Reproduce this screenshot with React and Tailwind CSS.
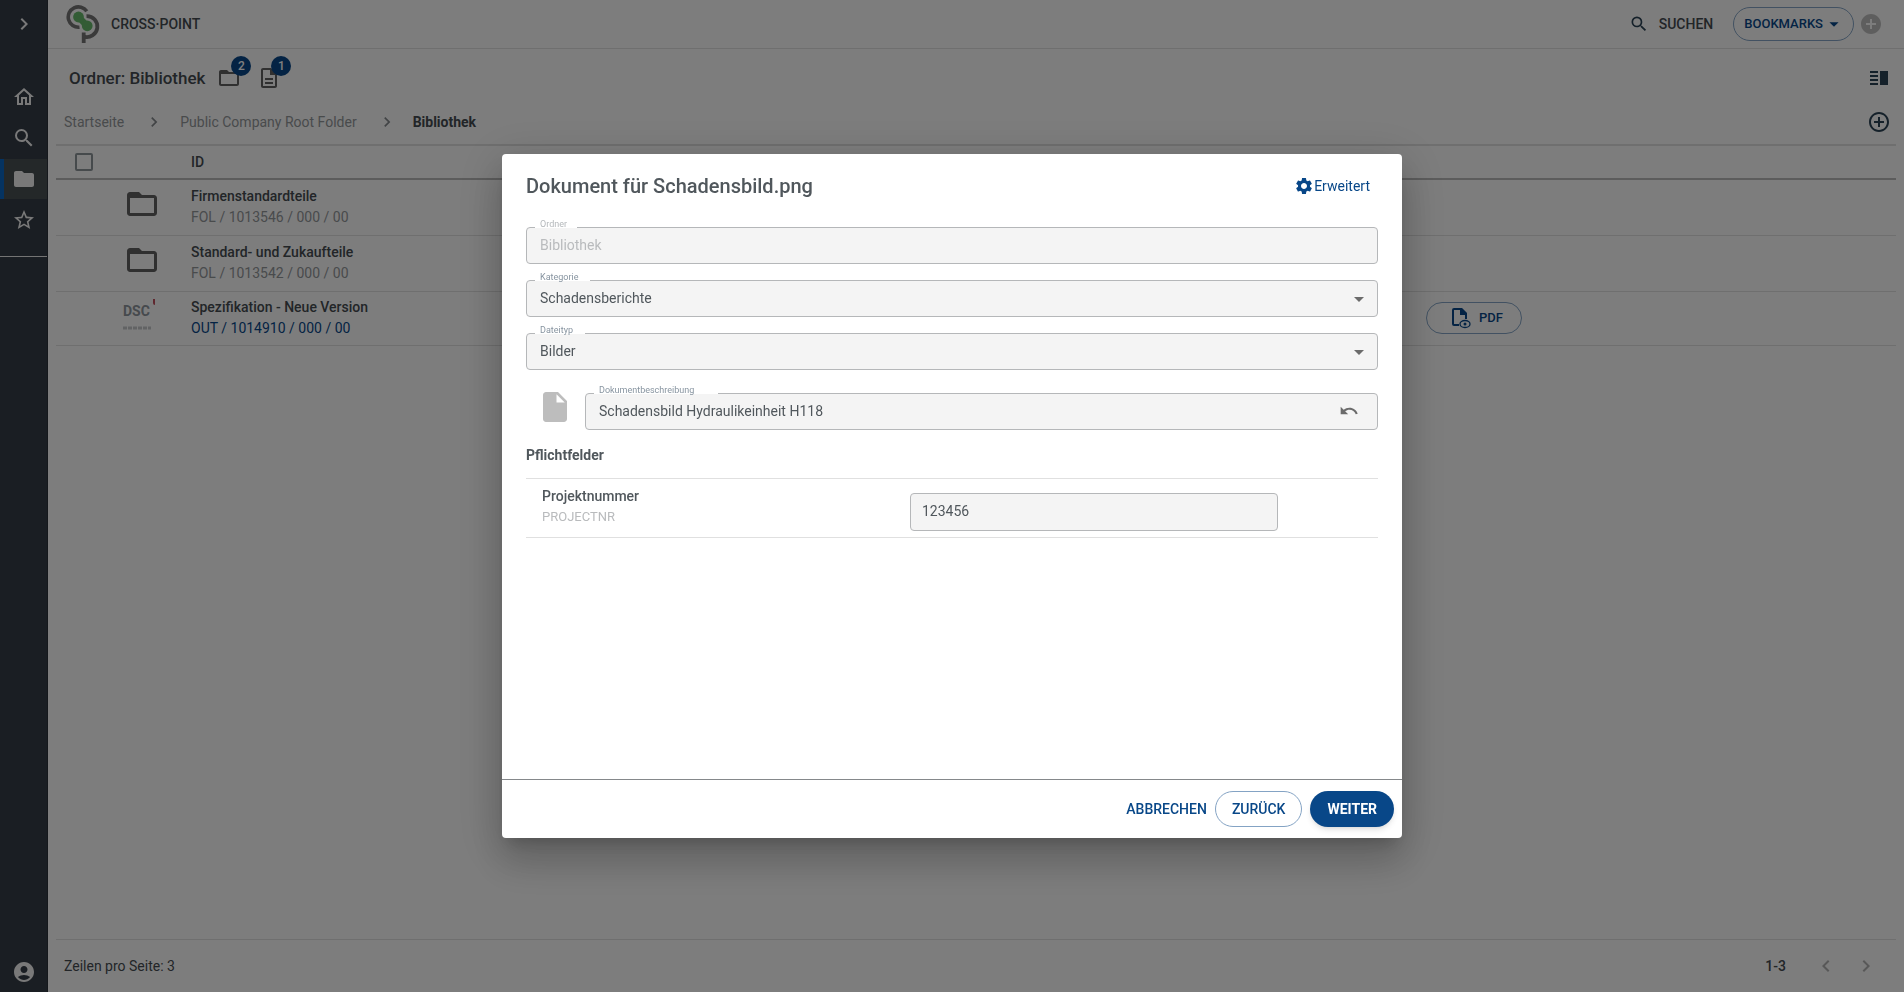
import React, { useState } from "react";
import {
  MdChevronLeft, MdChevronRight, MdSearch, MdFolder, MdStarBorder, MdAccountCircle, MdOutlineHome,
  MdArrowDropDown, MdAddCircle, MdAddCircleOutline, MdVerticalSplit, MdInsertDriveFile, MdSettings, MdUndo,
} from "react-icons/md";

const navItems = [
  { label: "Home",      Icon: MdOutlineHome },
  { label: "Suche",     Icon: MdSearch },
  { label: "Ordner",    Icon: MdFolder, active: true },
  { label: "Favoriten", Icon: MdStarBorder },
];

const rows = [
  { id: "FOL / 1013546 / 000 / 00", title: "Firmenstandardteile",         type: "folder" },
  { id: "FOL / 1013542 / 000 / 00", title: "Standard- und Zukaufteile",   type: "folder" },
  { id: "OUT / 1014910 / 000 / 00", title: "Spezifikation - Neue Version", type: "document" },
];

function Logo() {
  return (
    <svg width="34" height="38" viewBox="0 0 34 38" fill="none" aria-hidden="true">
      <path d="M20.8 6.2A10.2 10.2 0 1 0 13.500 22.2" stroke="#747474" strokeWidth="3.6" />
      <path d="M20.5 11.100A10.500 10.500 0 1 1 17.7 31.600M17.7 27.5V38" stroke="#747474" strokeWidth="3.8" />
      <path d="M12.5 12 21 20.700" stroke="#66b96a" strokeWidth="6.500" />
      <circle cx="12.5" cy="12" r="5.4" fill="#66b96a" />
      <circle cx="21.2" cy="20.800" r="5.4" fill="#66b96a" />
    </svg>
  );
}

function FolderOutline({ size }) {
  return (
    <svg width={size} height={size} viewBox="0 0 24 24" fill="currentColor" aria-hidden="true">
      <path d="M20 6h-8l-2-2H4c-1.1 0-1.99.9-1.99 2L2 18c0 1.1.9 2 2 2h16c1.1 0 2-.9 2-2V8c0-1.1-.9-2-2-2zm0 12H4V8h16v10z" />
    </svg>
  );
}

function DocumentOutline() {
  return (
    <svg width="24" height="24" viewBox="0 0 24 24" fill="currentColor" aria-hidden="true">
      <path d="M8 16h8v2H8zm0-4h8v2H8zm6-10H6c-1.1 0-2 .9-2 2v16c0 1.1.89 2 1.99 2H18c1.1 0 2-.9 2-2V8l-6-6zm4 18H6V4h7v5h5v11z" />
    </svg>
  );
}

function Thumbnail() {
  return (
    <div className="relative -ml-px h-8 w-8">
      <span className="block text-sm leading-6 font-bold text-[#8d949b]">DSC</span>
      <svg width="32" height="32" viewBox="0 0 32 32" className="absolute inset-0" fill="none" aria-hidden="true">
        <path d="M30 0h2v6q-2 0-2-2z" fill="#c0505e" />
        <path d="M0 29h28" stroke="#c4c7c9" strokeWidth="3" strokeDasharray="4 1" />
      </svg>
    </div>
  );
}

function PdfPreviewIcon() {
  return (
    <svg width="20" height="22" viewBox="0 0 20 22" fill="none" aria-hidden="true">
      <path d="M8 18H3q-1 0-1-1V3q0-1 1-1h7l5 5v5" stroke="currentColor" strokeWidth="2" />
      <path d="M9 1h2l5 5v2H9z" fill="currentColor" />
      <ellipse cx="14" cy="17" rx="5" ry="3.500" stroke="currentColor" strokeWidth="1.300" />
      <circle cx="14" cy="17" r="1.500" fill="currentColor" />
    </svg>
  );
}

function Sidebar() {
  return (
    <nav className="flex w-12 shrink-0 flex-col items-center border-r border-[#2a3038] bg-[#343c46] text-[#f2f2f2]">
      <button aria-label="Menü öffnen" className="flex h-12 w-full items-center justify-center">
        <MdChevronRight size={24} />
      </button>
      <div className="mt-[29px] flex w-full flex-col gap-px">
        {navItems.map(({ label, Icon, active }) => (
          <a key={label} href="#" aria-label={label}
            className={`flex h-10 items-center justify-center ${active ? "border-l-4 border-[#0b66c3] bg-[#485052] pr-1" : ""}`}>
            <Icon size={24} />
          </a>
        ))}
      </div>
      <hr className="mt-4 w-full border-[#e8e8e8]" />
      <a href="#" aria-label="Konto" className="mt-auto flex h-10 items-center"><MdAccountCircle size={24} /></a>
    </nav>
  );
}

function CountBadge({ count, children }) {
  return (
    <span className="relative text-[#616161]">
      {children}
      <span className="absolute -top-[10px] left-[14px] flex h-5 w-5 items-center justify-center rounded-full bg-[#084788] text-xs font-medium text-white">
        {count}
      </span>
    </span>
  );
}

function Field({ id, label, labelClass, className = "", children }) {
  return (
    <div className={`relative h-[37px] ${className}`}>
      {children}
      <label htmlFor={id} className={`absolute -top-2 left-[9px] h-[9px] bg-white pl-[5px] text-[9px] leading-[11px] ${labelClass}`}>
        {label}
      </label>
    </div>
  );
}

const inputClass = "h-full w-full appearance-none rounded border border-[#b5b7b9] bg-[#f4f4f4] px-[13px] pb-0.5 text-sm outline-none";

function Select({ id, value }) {
  return (
    <>
      <select id={id} defaultValue={value} className={inputClass}>
        <option>{value}</option>
      </select>
      <MdArrowDropDown size={24} className="pointer-events-none absolute top-[7px] right-[7px] text-[#6b6b6b]" />
    </>
  );
}

function DocumentDialog() {
  const [description, setDescription] = useState("Schadensbild Hydraulikeinheit H118");
  const [project, setProject] = useState("123456");

  return (
    <div className="fixed inset-0 z-10 flex items-center justify-center bg-black/50">
      <div role="dialog" aria-modal="true" aria-labelledby="dialog-title"
        className="flex h-[684px] w-full max-w-[900px] flex-col rounded bg-white text-[#50575c] shadow-[0_11px_15px_-7px_rgba(0,0,0,0.2),0_24px_38px_3px_rgba(0,0,0,0.14),0_9px_46px_8px_rgba(0,0,0,0.12)]">
        <div className="flex-1 px-6">
          <div className="flex h-[73px] items-center justify-between pr-2 pb-[10px]">
            <h2 id="dialog-title" className="text-xl font-medium">Dokument für Schadensbild.png</h2>
            <button className="flex items-center text-sm text-[#084788]">
              <MdSettings size={20} />Erweitert
            </button>
          </div>

          <div className="flex flex-col gap-4">
            <Field id="folder" label="Ordner" labelClass="pr-[10px] text-[#b4b8bb]">
              <input id="folder" disabled value="Bibliothek" className={`${inputClass} text-[#b9bbbd]`} />
            </Field>
            <Field id="category" label="Kategorie" labelClass="pr-3 text-[#8794a0]">
              <Select id="category" value="Schadensberichte" />
            </Field>
            <Field id="filetype" label="Dateityp" labelClass="pr-3 text-[#8794a0]">
              <Select id="filetype" value="Bilder" />
            </Field>
          </div>

          <div className="mt-[23px] flex">
            <MdInsertDriveFile size={36} className="-mt-1 mr-3 ml-[11px] shrink-0 text-[#bdbdbd]" />
            <Field id="description" label="Dokumentbeschreibung" labelClass="pr-6 text-[#8794a0]" className="flex-1">
              <input id="description" value={description} onChange={e => setDescription(e.target.value)} className={inputClass} />
              <button aria-label="Zurücksetzen" onClick={() => setDescription("Schadensbild Hydraulikeinheit H118")}
                className="absolute top-2 right-[19px] text-[#6b6b6b]">
                <MdUndo size={20} />
              </button>
            </Field>
          </div>

          <h3 className="mt-[15px] text-sm font-bold">Pflichtfelder</h3>
          <div className="mt-[13px] flex items-center border-y border-[#e0e0e0] pt-1 pl-4">
            <div className="h-[54px] w-[368px] pt-[3px]">
              <label htmlFor="project" className="block text-sm font-medium">Projektnummer</label>
              <div className="text-[13px] leading-[22px] text-[#b9bbbd]">PROJECTNR</div>
            </div>
            <input id="project" value={project} onChange={e => setProject(e.target.value)}
              className="mt-1 h-[38px] w-[368px] rounded border border-[#b5b7b9] bg-[#f4f4f4] px-[11px] pb-0.5 text-sm outline-none" />
          </div>
        </div>

        <div className="flex h-[59px] items-center justify-end border-t border-[#85888b] px-2 text-sm font-medium text-[#084788]">
          <button className="px-2 py-2">ABBRECHEN</button>
          <button className="h-9 rounded-full border border-[#84a3c4] px-4">ZURÜCK</button>
          <button className="ml-2 h-9 rounded-full bg-[#084788] px-[17px] font-bold text-white shadow-md">WEITER</button>
        </div>
      </div>
    </div>
  );
}

export default function App() {
  return (
    <div className="flex min-h-screen bg-[#fbfbfb] text-sm text-[#454b50] [font-family:Roboto,sans-serif]">
      <Sidebar />
      <div className="flex min-w-0 flex-1 flex-col">
        <header className="flex h-[49px] shrink-0 items-center border-b border-[#dedede] pr-[21px] pl-[18px]">
          <Logo />
          <span className="ml-[11px] font-medium">CROSS·POINT</span>
          <button className="ml-auto flex items-center gap-[10px] font-medium">
            <MdSearch size={20} className="text-[#2b4254]" />SUCHEN
          </button>
          <button className="ml-5 flex h-[34px] items-center rounded-full border border-[#84a3c4] pr-2 pl-[10px] text-[13px] font-medium text-[#084788]">
            BOOKMARKS<MdArrowDropDown size={22} />
          </button>
          <button aria-label="Bookmark hinzufügen" className="ml-[5px] text-[#bdbdbd]"><MdAddCircle size={24} /></button>
        </header>

        <main className="flex flex-1 flex-col px-2">
          <div className="flex h-[58px] items-center gap-3 pr-[5px] pl-[13px]">
            <h1 className="text-[17px] font-medium">Ordner: Bibliothek</h1>
            <CountBadge count={2}><FolderOutline size={24} /></CountBadge>
            <span className="ml-1"><CountBadge count={1}><DocumentOutline /></CountBadge></span>
            <button aria-label="Ansicht teilen" className="ml-auto text-[#2b4254]"><MdVerticalSplit size={24} /></button>
          </div>

          <div className="flex h-[37px] items-center pr-[5px] pl-2 pb-[7px]">
            <a href="#" className="text-[#929699]">Startseite</a>
            <MdChevronRight size={20} className="mr-4 ml-5 text-[#85898c]" />
            <a href="#" className="text-[#929699]">Public Company Root Folder</a>
            <MdChevronRight size={20} className="mr-4 ml-5 text-[#85898c]" />
            <span className="font-bold">Bibliothek</span>
            <button aria-label="Hinzufügen" className="ml-auto text-[#2b4254]"><MdAddCircleOutline size={24} /></button>
          </div>

          <table className="w-full table-fixed border-t-2 border-[#dedede] text-left">
            <thead>
              <tr className="h-[34px] border-b-2 border-[#b8b8b8]">
                <th className="w-[60px] pl-[19px]">
                  <input type="checkbox" aria-label="Alle auswählen" className="block h-[18px] w-[18px] appearance-none rounded-xs border-2 border-[#8c9499]" />
                </th>
                <th className="w-[75px]" />
                <th className="font-medium">ID</th>
                <th className="w-[470px]" />
              </tr>
            </thead>
            <tbody>
              {rows.map(({ id, title, type }) => (
                <tr key={id} className="h-[56px] border-b border-[#dedede] last:h-[54px]">
                  <td />
                  <td className="pb-1.5 pl-2 text-[#616161]">
                    {type === "folder" ? <FolderOutline size={36} /> : <Thumbnail />}
                  </td>
                  <td className="leading-[21px]">
                    <div className="font-medium">{title}</div>
                    <div className={type === "folder" ? "text-[#929699]" : "text-[#084788]"}>{id}</div>
                  </td>
                  <td>
                    {type === "document" && (
                      <button className="flex h-8 w-24 items-center gap-2 rounded-full border border-[#84a3c4] pl-6 text-[13px] font-medium text-[#084788]">
                        <PdfPreviewIcon />PDF
                      </button>
                    )}
                  </td>
                </tr>
              ))}
            </tbody>
          </table>

          <footer className="mt-auto flex h-[53px] items-center border-t border-[#dedede] pr-[18px] pl-2">
            <span>Zeilen pro Seite: 3</span>
            <span className="ml-auto font-medium">1-3</span>
            <button disabled aria-label="Vorherige Seite" className="ml-7 text-[#b0b0b0]"><MdChevronLeft size={24} /></button>
            <button disabled aria-label="Nächste Seite" className="ml-4 text-[#b0b0b0]"><MdChevronRight size={24} /></button>
          </footer>
        </main>
      </div>
      <DocumentDialog />
    </div>
  );
}
